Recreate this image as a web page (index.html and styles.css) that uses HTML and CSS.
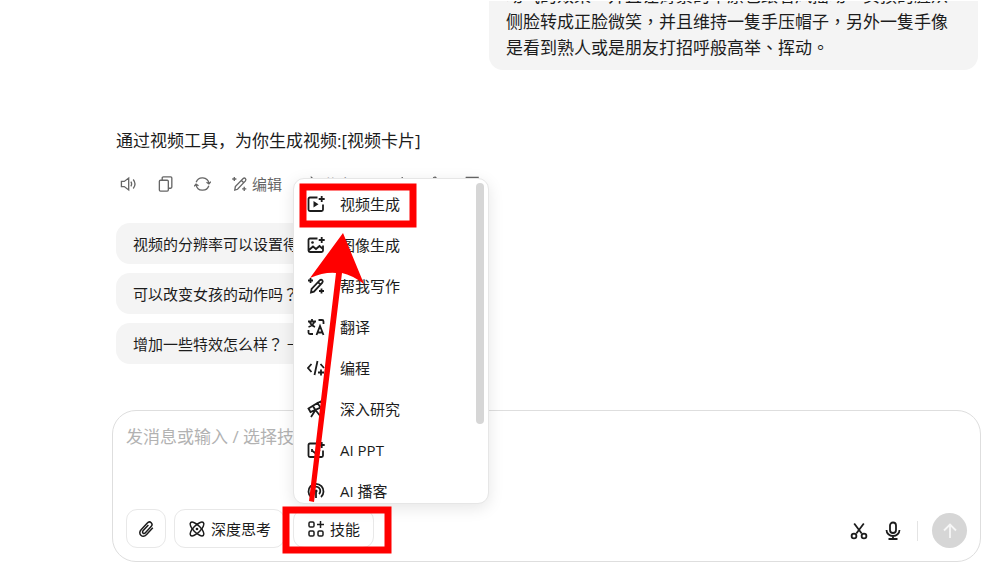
FILE: index.html
```html
<!DOCTYPE html>
<html lang="zh-CN">
<head>
    <meta charset="UTF-8">
    <title>对话</title>
    <link rel="stylesheet" href="styles.css">
</head>
<body>
    <div class="chat">
        <div class="messages">
            <p class="bubble" lang="zh-TW">动气的效果。并且让背景的草原也跟着风摇动。女孩的脸从<br>侧脸转成正脸微笑，并且维持一隻手压帽子，另外一隻手像<br>是看到熟人或是朋友打招呼般高举、挥动。</p>
            <p class="reply">通过视频工具，为你生成视频:[视频卡片]</p>
            <div class="actions">
                <button type="button" aria-label="朗读">
                    <svg viewBox="0 0 18 18"><path d="M1.500 6.300v5.400h3l4.700 3.600V2.700L4.500 6.300zM11.500 6.500q1.600 2.500 0 5M14 4.200q3.800 4.800 0 9.600"/></svg>
                </button>
                <button type="button" aria-label="复制">
                    <svg viewBox="0 0 18 18"><rect x="2.500" y="5" width="9.500" height="11.500" rx="1.200"/><path d="M5.500 5V2.700q0-1.200 1.200-1.200h7.800q1.200 0 1.200 1.200v9.600q0 1.200-1.200 1.200H12"/></svg>
                </button>
                <button type="button" aria-label="重新生成">
                    <svg viewBox="0 0 18 18"><path d="M2.300 7.200a7 7 0 0 1 13.500 1M15.700 10.800A7 7 0 0 1 2.200 9.800M13.200 7.200l2.600 1.600 2-2.300M4.800 10.800L2.200 9.200.2 11.500"/></svg>
                </button>
                <button type="button">
                    <svg viewBox="0 0 18 18"><path d="M4 15.500l.6-3.700 8.300-8.600q1.200-1 2.300 0t.1 2.500l-8.400 8.900zM11 5.200l2.500 2.500M3.500 1.500v4.400M1.300 3.700h4.400M14 12v4.400M11.800 14.200h4.400"/></svg>
                    编辑
                </button>
                <button type="button">
                    <svg viewBox="0 0 18 18"><path d="M10 2l6 5.500-6 5.500V9.800Q4.500 9.500 2 14q.5-7 8-8.500z"/></svg>
                    分享
                </button>
                <button type="button" class="mark-btn" aria-label="收藏">
                    <svg viewBox="0 0 18 18"><path d="M14 1.500v5M11.500 4h5M10 5H3v11l5.500-3.500L14 16V9"/></svg>
                </button>
                <button type="button" aria-label="赞">
                    <svg viewBox="0 0 18 18"><path d="M2 8h3v8H2zM5 8.500L8.200 2.200q1.800-1.400 2.600.8L10.300 7H16l-1.500 9H5"/></svg>
                </button>
                <button type="button" aria-label="踩">
                    <svg viewBox="0 0 18 18"><path d="M16 10h-3V2h3zM13 9.500l-3.200 6.300q-1.800 1.400-2.600-.8L7.700 11H2l1.500-9H13"/></svg>
                </button>
            </div>
            <div class="suggests">
                <button type="button">视频的分辨率可以设置得更高吗？ →</button>
                <button type="button" lang="zh-TW">可以改变女孩的动作吗？ →</button>
                <button type="button" lang="zh-TW">增加一些特效怎么样？ →</button>
            </div>
        </div>
        <form class="composer">
            <textarea aria-label="消息" placeholder="发消息或输入 / 选择技能"></textarea>
            <div class="toolbar">
                <button type="button" class="tool clip" aria-label="附件">
                    <svg viewBox="0 0 18 18"><path d="M15.800 7.800L9.600 14.500c-2 2.100-4.300 2-5.700.7-1.500-1.400-1.500-3.700.2-5.500l6-6.500c1.300-1.400 3-1.500 4.100-.5 1.100 1.100 1.100 2.600-.1 3.900l-5.700 6.200c-.8.9-1.800.9-2.400.3-.7-.6-.6-1.600.2-2.500l5.200-5.700"/></svg>
                </button>
                <button type="button" class="tool">
                    <svg viewBox="0 0 18 18"><ellipse cx="9" cy="9" rx="3.600" ry="9" transform="rotate(45 9 9)"/><ellipse cx="9" cy="9" rx="3.600" ry="9" transform="rotate(-45 9 9)"/><circle cx="9" cy="9" r=".6" class="fill"/></svg>
                    深度思考
                </button>
                <div class="skill">
                    <button type="button" class="tool">
                        <svg viewBox="0 0 18 18"><rect x="2" y="2" width="5" height="5" rx="1.300"/><rect x="2" y="11" width="5" height="5" rx="1.300"/><rect x="11" y="11" width="5" height="5" rx="1.300"/><path d="M13.500 1v7M10 4.500h7"/></svg>
                        技能
                    </button>
                    <div class="menu">
                        <ul>
                            <li><button type="button"><svg viewBox="0 0 18 18"><path d="M10.500 2.500H3q-1.500 0-1.500 1.500v10.500Q1.500 16 3 16h11.500q1.500 0 1.500-1.500V9.500M14.700 1v6M11.700 4h6"/><path class="solid" d="M6.500 6v6.500l5-3.200z"/></svg>视频生成</button></li>
                            <li><button type="button"><svg viewBox="0 0 18 18"><path d="M10.500 2.500H3q-1.500 0-1.500 1.500v10.500Q1.500 16 3 16h11.500q1.500 0 1.500-1.500V9.500M14.700 1v6M11.700 4h6M2 14l4-3.500 3 2.500 3.500-3 3.500 3"/><circle class="solid" cx="5.500" cy="6.500" r="1.300"/></svg>图像生成</button></li>
                            <li><button type="button"><svg viewBox="0 0 18 18"><path d="M4 15.500l.6-3.700 8.300-8.600q1.200-1 2.300 0t.1 2.500l-8.400 8.900zM11 5.200l2.500 2.500M3.500 1v5M1 3.500h5M14.500 11.500v5M12 14h5"/></svg>帮我写作</button></li>
                            <li><button type="button"><svg viewBox="0 0 18 18"><path d="M1 3.500h8M5 1v2.500M2.500 3.500Q4 7.500 8 9M7.500 3.500Q6 7.500 1.500 9M11.500 2H15q1.500 0 1.500 1.500V6M1.500 12v2.500Q1.500 16 3 16h3M9.500 17l3.500-9 3.500 9M10.500 14.500h5"/></svg>翻译</button></li>
                            <li><button type="button"><svg viewBox="0 0 18 18"><path d="M4.500 5L1 9l3.500 4M10.500 2L7.500 16M13.500 5L17 9M14 10.500v6M11 13.500h6"/></svg>编程</button></li>
                            <li><button type="button"><svg viewBox="0 0 18 18"><path d="M1.500 8.500l9-5.500 3 4.500-10 4.500zM6 6l2 3.500M10.500 3L14 1.500l3 5-3.500 1M8.500 10L4 17M8.500 10l5.500 7"/></svg>深入研究</button></li>
                            <li><button type="button"><svg viewBox="0 0 18 18"><path d="M10.500 2.500H3q-1.500 0-1.500 1.500v10.500Q1.500 16 3 16h11.500q1.500 0 1.500-1.500V9.500M14.700 1v6M11.700 4h6M5 8v3M5 9.500l3 2.500 5-3"/></svg>AI PPT</button></li>
                            <li><button type="button"><svg viewBox="0 0 18 18"><path d="M4 15A7.500 7.500 0 1 1 14 15M6 12a4.300 4.300 0 1 1 6 0M9 9v7"/><circle class="solid" cx="9" cy="9" r="1.600"/></svg>AI 播客</button></li>
                        </ul>
                        <span class="thumb"></span>
                    </div>
                    <!-- 操作标注 -->
                    <svg class="mark" viewBox="282 182 136 372">
                        <rect x="303" y="187" width="110" height="37"/>
                        <rect x="286" y="510" width="102" height="40"/>
                        <path d="M343 233L364 284Q352 275 342 273L314 502L309 501L336 273Q324 272 310 278Z"/>
                    </svg>
                </div>
                <div class="right">
                    <button type="button" aria-label="截图">
                        <svg viewBox="0 0 20 20"><path d="M5.200 2.500l7.500 10M14.800 2.500l-7.500 10"/><circle cx="5" cy="15" r="2.400"/><circle cx="15" cy="15" r="2.400"/></svg>
                    </button>
                    <button type="button" aria-label="语音">
                        <svg viewBox="0 0 20 20"><rect x="7" y="1.500" width="6" height="10.500" rx="3"/><path d="M3.500 9a6.500 6 0 0 0 13 0M10 15v3M5.500 18h9"/></svg>
                    </button>
                    <span class="line"></span>
                    <button type="submit" class="send" aria-label="发送">
                        <svg viewBox="0 0 18 18"><path d="M9 16V2.500M3 8.500l6-6 6 6"/></svg>
                    </button>
                </div>
            </div>
        </form>
    </div>
</body>
</html>
```
FILE: styles.css
```css
*{ box-sizing: border-box;}
body,p,ul{ margin: 0; padding: 0;}
ul{ list-style: none;}
body{
    background: #fff;
    color: #1c1c1c;
    font-family: "Open Sans", "Noto Sans CJK SC", sans-serif;
    font-size: 15px;
}
[lang="zh-TW"]{
    font-family: "Open Sans", "Noto Sans CJK TC", sans-serif;
}
button,textarea{
    margin: 0;
    padding: 0;
    border: 0;
    background: none;
    color: inherit;
    font-family: inherit;
    font-size: inherit;
}
button{
    line-height: 20px;
    cursor: pointer;
    white-space: nowrap;
}
svg{
    flex: none;
    width: 18px;
    height: 18px;
    fill: none;
    stroke: currentColor;
    stroke-width: 1.5;
}
.fill{
    fill: currentColor;
}
.solid{
    fill: currentColor;
    stroke: none;
}
.chat{
    display: flex;
    flex-direction: column;
    height: 100vh;
    padding: 1px 19px 0 112px;
    overflow: hidden;
}
/* 消息列表贴底，超出部分在顶部裁掉 */
.messages{
    display: flex;
    flex: 1;
    flex-direction: column;
    justify-content: flex-end;
    min-height: 0;
    padding: 0 3px 46px 4px;
    overflow: hidden;
}
.bubble{
    align-self: flex-end;
    width: 489px;
    max-width: 100%;
    padding: 9px 17px;
    border-radius: 14px;
    background: #f4f4f4;
    font-size: 17px;
    line-height: 26px;
}
.reply{
    margin-top: 58px;
    font-size: 17px;
    line-height: 26px;
}
.actions{
    display: flex;
    gap: 20px;
    margin-top: 18px;
    padding-left: 4px;
    color: #666;
}
.actions button{
    display: flex;
    align-items: center;
    gap: 4px;
    height: 24px;
}
.actions svg{
    width: 17px;
    stroke-width: 1.4;
}
.actions .mark-btn{
    margin-left: 16px;
}
.suggests{
    display: flex;
    flex-direction: column;
    align-items: flex-start;
    gap: 9px;
    margin-top: 27px;
}
.suggests button{
    height: 41px;
    padding: 0 17px;
    border-radius: 14px;
    background: #f4f4f4;
}
.composer{
    padding: 13px;
    border: 1px solid #dedede;
    border-radius: 24px;
}
.composer textarea{
    display: block;
    width: 100%;
    height: 72px;
    margin-bottom: 13px;
    outline: none;
    resize: none;
    font-size: 17px;
    line-height: 26px;
}
.composer textarea::placeholder{
    color: #b2b2b2;
}
.toolbar{
    display: flex;
    gap: 8px;
}
.tool{
    display: flex;
    align-items: center;
    gap: 5px;
    height: 39px;
    padding: 0 13px;
    border: 1px solid #e8e8e8;
    border-radius: 11px;
}
.clip{
    padding: 0 10px;
}
.skill{
    position: relative;
}
.menu{
    position: absolute;
    bottom: calc(100% + 5px);
    left: 0;
    width: 196px;
    height: 326px;
    border: 1px solid #e6e6e6;
    border-radius: 11px;
    background: #fff;
    box-shadow: 0 4px 16px rgba(0,0,0,.1);
    overflow: hidden;
}
.menu ul{
    padding-top: 4px;
}
.menu li button{
    display: flex;
    align-items: center;
    gap: 15px;
    width: 100%;
    height: 41px;
    padding-left: 13px;
}
.menu svg{
    stroke-width: 1.8;
}
.thumb{
    position: absolute;
    top: 4px;
    right: 4px;
    width: 8px;
    height: 241px;
    border-radius: 4px;
    background: #d6d6d6;
}
.mark{
    position: absolute;
    bottom: -6px;
    left: -11px;
    width: 136px;
    height: 372px;
    pointer-events: none;
}
.mark rect{
    stroke: #f00;
    stroke-width: 7;
}
.mark path{
    fill: #f00;
    stroke: none;
}
.right{
    display: flex;
    align-items: center;
    gap: 14px;
    height: 43px;
    margin: 0 0 -4px auto;
}
.right svg{
    display: block;
    width: 20px;
    height: 20px;
    stroke-width: 1.8;
}
.line{
    width: 1px;
    height: 20px;
    background: #e4e4e4;
}
.send{
    display: flex;
    align-items: center;
    justify-content: center;
    width: 35px;
    height: 35px;
    border-radius: 50%;
    background: #d6d6d6;
    color: #f6f6f6;
}
.right .send svg{
    width: 18px;
    height: 18px;
}
```
